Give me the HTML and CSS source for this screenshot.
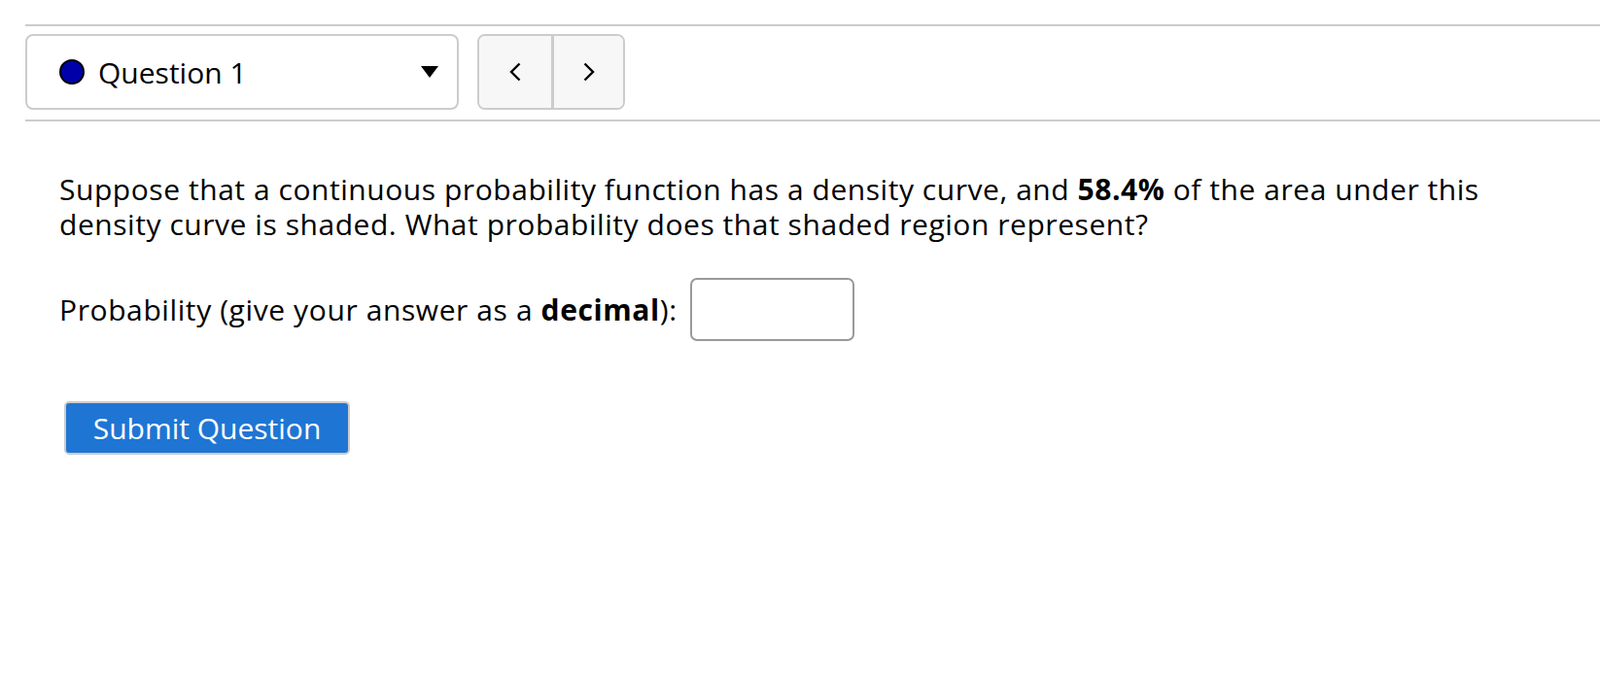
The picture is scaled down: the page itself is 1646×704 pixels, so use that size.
FILE: index.html
```html
<!DOCTYPE html>
<html lang="en">
<head>
    <meta charset="UTF-8">
    <title>Question 1</title>
    <link rel="stylesheet" href="styles.css">
</head>
<body>

    <!-- Question navigation -->
    <div class="nav">
        <div class="q-select">
            <span class="dot"></span>
            <span class="q-label">Question 1</span>
            <span class="caret"></span>
        </div>
        <div class="q-arrows">
            <button class="arrow">
                <svg width="14" height="20" viewBox="0 0 14 20"><path d="M11.5 1.5 L3 10 L11.5 18.5" fill="none" stroke="#000" stroke-width="2.4"/></svg>
            </button>
            <button class="arrow">
                <svg width="14" height="20" viewBox="0 0 14 20"><path d="M2.5 1.5 L11 10 L2.5 18.5" fill="none" stroke="#000" stroke-width="2.4"/></svg>
            </button>
        </div>
    </div>

    <div class="question">
        <p class="q-text">Suppose that a continuous probability function has a density curve, and <b>58.4%</b> of the area under this density curve is shaded. What probability does that shaded region represent?</p>
        <p class="answer"><span>Probability (give your answer as a <b>decimal</b>):</span> <input type="text" class="answer-box"></p>
        <button class="submit">Submit Question</button>
    </div>

</body>
</html>
```

FILE: styles.css
```css
/* Basic Styling */
body {
    margin: 0;
    font-family: "Open Sans", sans-serif;
    color: #000;
}
.nav {
    margin: 25px 0 0 26px;
    border-top: 2px solid #ccc;
    border-bottom: 2px solid #ccc;
    padding: 8px 0 10px;
    display: flex;
    gap: 19px;
}
.q-select {
    width: 446px;
    height: 78px;
    box-sizing: border-box;
    border: 2px solid #ccc;
    border-radius: 8px;
    display: flex;
    align-items: center;
    padding-left: 33px;
}
.dot {
    width: 26px;
    height: 26px;
    box-sizing: border-box;
    border: 2.5px solid #000;
    border-radius: 50%;
    background: #0000a8;
    margin-right: 14px;
}
.q-label {
    font-size: 30px;
    flex: 1;
}
.caret {
    width: 0;
    height: 0;
    border-left: 9px solid transparent;
    border-right: 9px solid transparent;
    border-top: 12px solid #000;
    margin-right: 19px;
}
.q-arrows {
    display: flex;
    border: 2px solid #ccc;
    border-radius: 8px;
    overflow: hidden;
    height: 78px;
    box-sizing: border-box;
}
.arrow {
    width: 74px;
    border: none;
    background: #f7f7f7;
    display: flex;
    align-items: center;
    justify-content: center;
    padding: 0;
}
.arrow + .arrow {
    border-left: 3px solid #ccc;
}
.question {
    padding: 52px 0 0 61px;
}
.q-text {
    font-size: 30px;
    line-height: 36px;
    letter-spacing: 0.55px;
    margin: 0;
    max-width: 1500px;
}
.answer {
    font-size: 30px;
    letter-spacing: 0.6px;
    margin: 37px 0 0;
    display: flex;
    align-items: center;
}
.answer-box {
    width: 169px;
    height: 65px;
    box-sizing: border-box;
    border: 2px solid #999;
    border-radius: 7px;
    margin-left: 13px;
}
.submit {
    display: block;
    margin: 62px 0 0 5px;
    width: 294px;
    height: 55px;
    background: #1f75d3;
    color: #fff;
    font-family: inherit;
    font-size: 30px;
    border: 2px solid #ccc;
    border-radius: 5px;
}
```
